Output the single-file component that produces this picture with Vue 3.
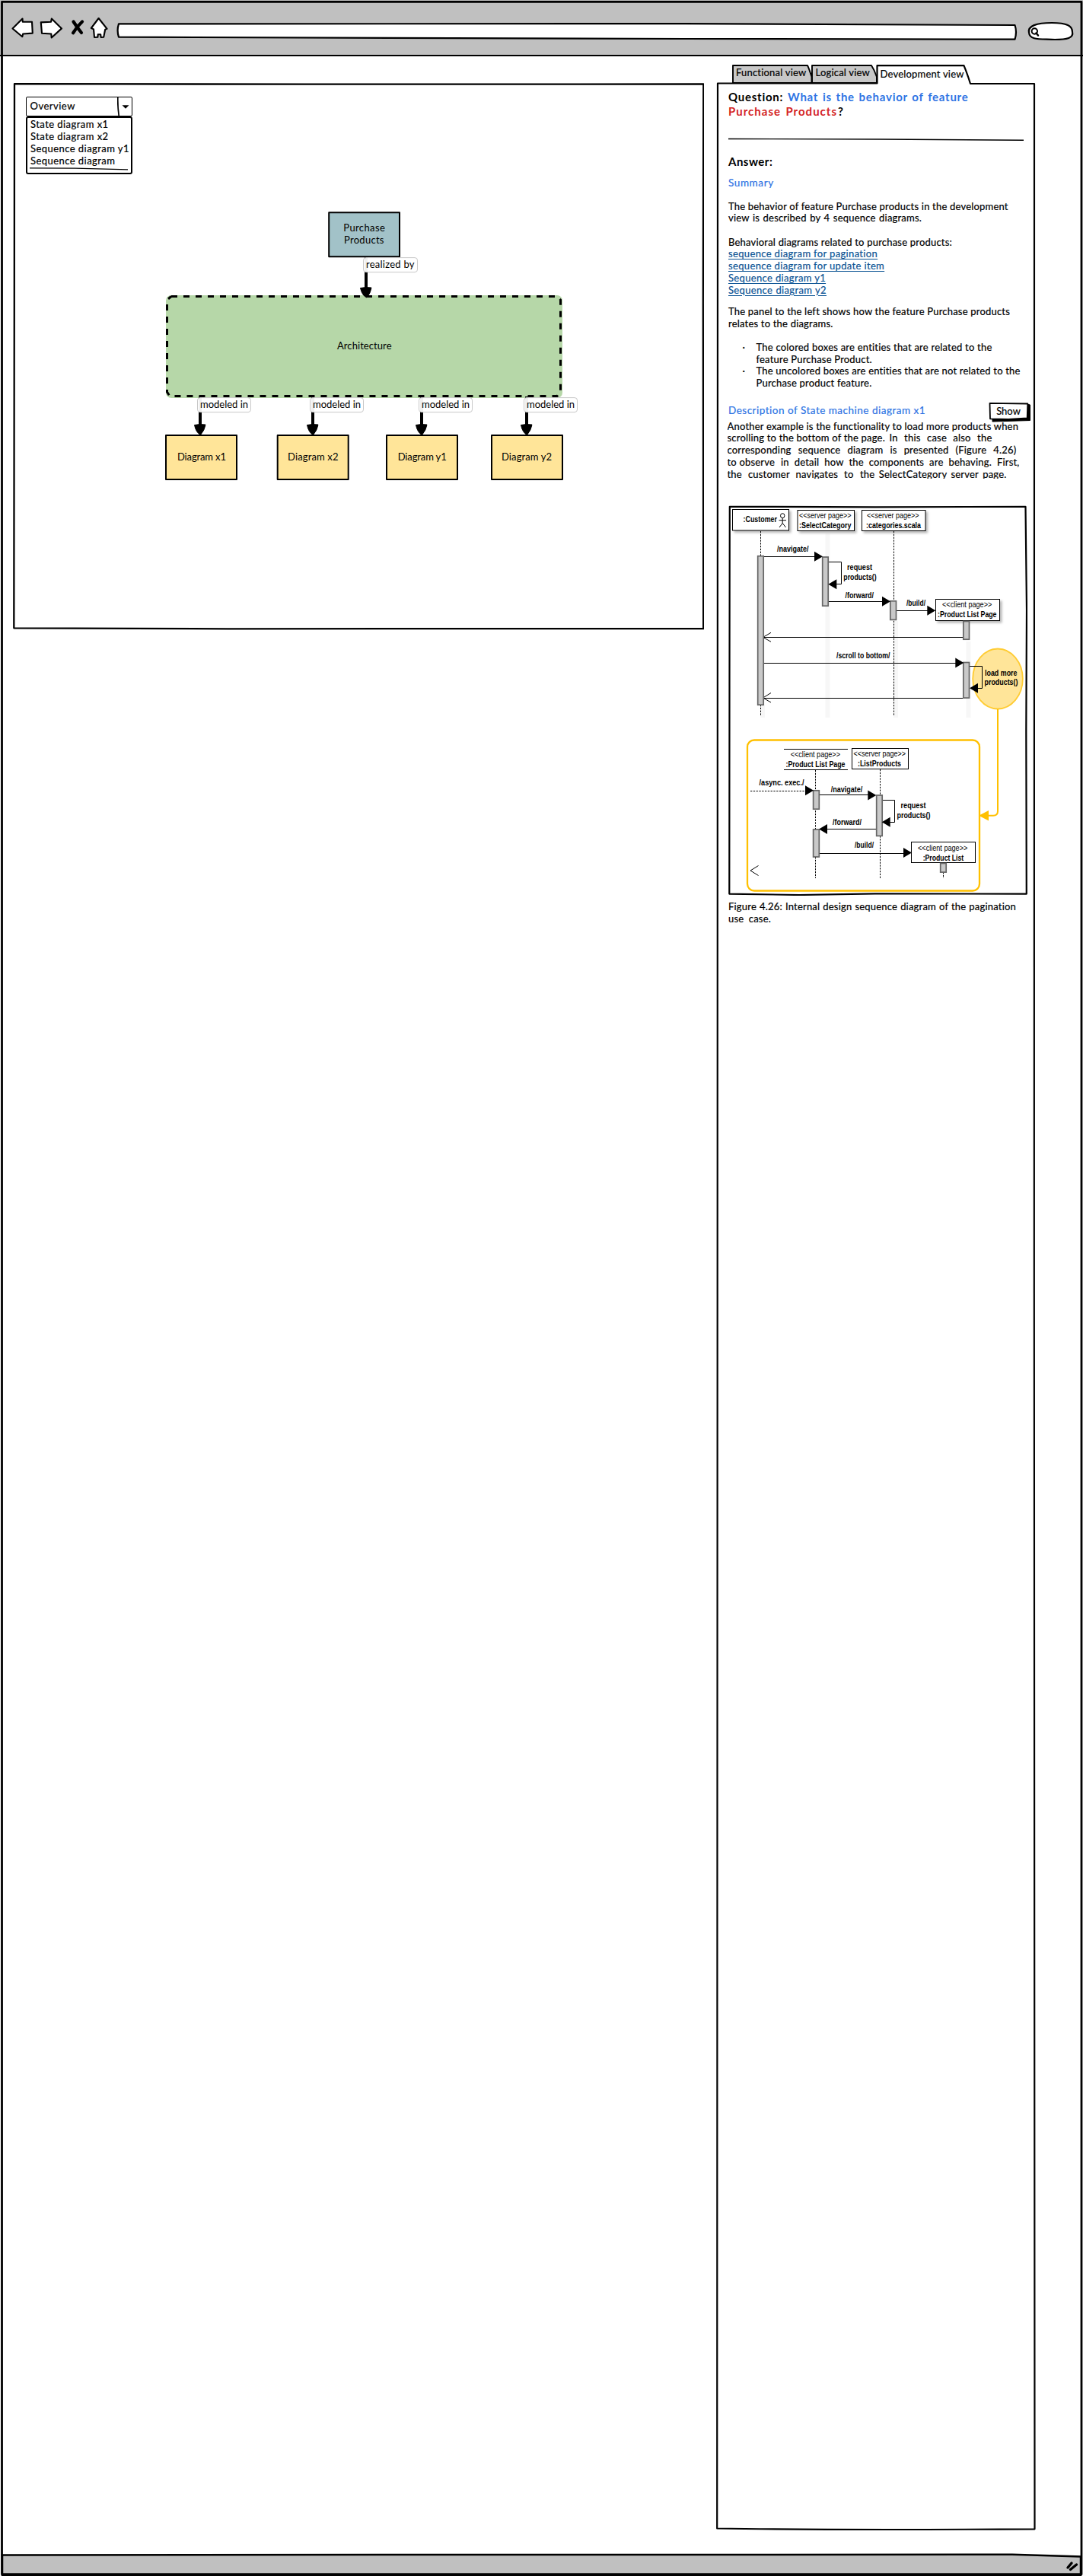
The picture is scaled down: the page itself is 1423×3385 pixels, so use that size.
<script setup>
const options = [
  ['State diagram x1', 98],
  ['State diagram x2', 100],
  ['Sequence diagram y1', 126],
  ['Sequence diagram', 109.5],
]

const summary = [
  ['The behavior of feature Purchase products in the development', 367],
  ['view is described by 4 sequence diagrams.', 254],
]
const links = [
  ['sequence diagram for pagination', 191.5],
  ['sequence diagram for update item', 202],
  ['Sequence diagram y1', 126],
  ['Sequence diagram y2', 129],
]
const panelNote = [
  ['The panel to the left shows how the feature Purchase products', 369],
  ['relates to the diagrams.', 137],
]
const bullets = [
  [
    ['The colored boxes are entities that are related to the', 310],
    ['feature Purchase Product.', 151.5],
  ],
  [
    ['The uncolored boxes are entities that are not related to the', 347],
    ['Purchase product feature.', 151],
  ],
]
const description = [
  [['Another example is the functionality to load more products when', 379]],
  [['scrolling to the bottom of the page.', 204.5], ['In this case also the', 135]],
  [['corresponding sequence diagram is presented (Figure 4.26)', 380]],
  [['to observe', 62], ['in detail how the components are behaving. First,', 313.5]],
  [['the customer navigates to', 166], ['the SelectCategory server page.', 192.5]],
]
const caption = [
  ['Figure 4.26: Internal design sequence diagram of the pagination', 378],
  ['use case.', 56],
]

const diagrams = [
  { x: 218, name: 'Diagram x1', tx: 233, w: 64, arrow: 263 },
  { x: 364.7, name: 'Diagram x2', tx: 378, w: 66.5, arrow: 411 },
  { x: 508, name: 'Diagram y1', tx: 522.7, w: 64, arrow: 554 },
  { x: 646, name: 'Diagram y2', tx: 659, w: 66, arrow: 692 },
]

// [text, x, baseline, width, light]
const labels = [
  [':Customer', 976.5, 685.3, 44.5],
  ['<<server page>>', 1050, 679.7, 68.5, true],
  [':SelectCategory', 1050, 692.8, 68.5],
  ['<<server page>>', 1139, 679.7, 68.5, true],
  [':categories.scala', 1138, 692.8, 72],
  ['/navigate/', 1021, 723.8, 41.5],
  ['request', 1113, 747.8, 33],
  ['products()', 1108.3, 760.7, 43.3],
  ['/forward/', 1110.5, 784.5, 37.5],
  ['/build/', 1191, 794.6, 25],
  ['<<client page>>', 1238, 797.2, 65.3, true],
  [':Product List Page', 1232, 810.2, 77.5],
  ['/scroll to bottom/', 1099, 863.7, 70.5],
  ['load more', 1294, 886.5, 42.5],
  ['products()', 1293.5, 899.4, 44],
  ['<<client page>>', 1038.7, 993.7, 65.3, true],
  [':Product List Page', 1032.5, 1006.5, 78],
  ['<<server page>>', 1121.5, 993, 68.5, true],
  [':ListProducts', 1127, 1006, 57],
  ['/async. exec./', 997.5, 1031, 59],
  ['/navigate/', 1091.7, 1039.6, 41.5],
  ['request', 1183.5, 1060.8, 33],
  ['products()', 1178.5, 1073.7, 44],
  ['/forward/', 1094, 1082.6, 38],
  ['/build/', 1123, 1113, 25],
  ['<<client page>>', 1206, 1116.5, 65.3, true],
  [':Product List', 1212.7, 1129.5, 53.5],
]

// [x, y, width, height]
const activations = [
  [995.7, 729.7, 7.5, 195.5],
  [1080.7, 731, 7.5, 64.2],
  [1169.8, 788.8, 7.7, 24.6],
  [1265.8, 815.5, 7.7, 23.7],
  [1265.8, 869.5, 7.7, 46.6],
  [1068.6, 1037.8, 7.7, 24.4],
  [1068.6, 1089, 7.7, 36],
  [1151.7, 1044, 7.5, 53.4],
  [1235.7, 1133.5, 7.5, 11.6],
]

const solid = [
  'M1003 730.5H1072',
  'M1088 737.5H1105.5V766.5H1099',
  'M1088 789.5H1161',
  'M1178 801.5H1220',
  'M1265 836.5H1003',
  'M1003 870.5H1257',
  'M1274 874.5H1290.5V903.5H1284',
  'M1265 916.5H1003',
  'M1077 1043.5H1141',
  'M1159 1050.5H1175.5V1079.5H1168',
  'M1151 1088.5H1085',
  'M1076 1120.5H1188',
  'M1030 983.5H1114M1030 1010.5H1114',
]
const dashed = ['M999.5 697V940', 'M1174.5 697V940', 'M986 1038.5H1058', 'M1071.5 1011V1153', 'M1156.5 1010V1153', 'M1239.5 1145V1153']

// [tip x, y, direction]
const heads = [
  [1081, 730.3, 1], [1088.3, 766.7, -1], [1170, 789.3, 1], [1229.3, 801.3, 1],
  [1266.3, 870, 1], [1274, 903.3, -1],
  [1069, 1037.8, 1], [1151.3, 1044, 1], [1158.7, 1079.3, -1], [1076, 1088.6, -1], [1198, 1119.6, 1],
]
</script>

<template>
  <div class="window">
    <header class="toolbar">
      <svg class="nav" width="150" height="70" viewBox="0 0 150 70">
        <g fill="#fff" stroke="#000" stroke-width="2.1" stroke-linejoin="round">
          <path d="M16.5 37.5 29.5 24.5 29.8 28.7 42 28.7 42.8 43.6 30.2 44.5 29.3 48.3Z" />
          <path d="M53.8 29.4 67 28.7 67.8 24.6 81 37.4 67.7 49.5 67.3 44.5 55 43.7Z" />
          <path d="M129.6 24 119.8 37 123 38.4 124 49 128.4 48.8 128.7 45.2 132.2 45.2 132.6 49 136.2 48.8 138.2 38.7 140.6 37.8Z" />
        </g>
        <path d="M96.5 28.5Q102 37 107 43M108 28.5Q101 35 96 43.3" fill="none" stroke="#000" stroke-width="4.2" stroke-linecap="round" />
      </svg>
      <svg class="address" width="1186" height="26" viewBox="152 28 1186 26">
        <path d="M156 31.3 900 31.2 1333.5 33Q1336.5 42 1333.5 51.7L900 51 156 48.7Q153.200 40 156 31.3Z" fill="#fff" stroke="#000" stroke-width="2.2" stroke-linejoin="round" />
      </svg>
      <svg class="search" width="64" height="30" viewBox="1348 26 64 30">
        <path d="M1352 43C1350 34 1362 30 1382 30C1402 30 1409 34 1409 42C1411 50 1402 52 1386 52C1366 51 1353 53 1352 43Z" fill="#fff" stroke="#000" stroke-width="2.2" />
        <circle cx="1359.3" cy="41" r="3.7" fill="#fff" stroke="#000" stroke-width="2" />
        <path d="M1361.500 43.500 1364 46.500" stroke="#000" stroke-width="2.4" stroke-linecap="round" />
      </svg>
    </header>

    <main class="content">
      <section class="overview">
        <svg class="frame" width="908" height="720" viewBox="17 108 908 720">
          <path d="M19 110.200 400 110.700 924.300 110.500 923.800 400 924.200 826 300 826.300 18.300 825.300 18.800 400Z" fill="none" stroke="#000" stroke-width="2.300" stroke-linejoin="round" />
        </svg>

        <div class="picker">
          <div class="combo">
            <span class="line combo-value">Overview</span>
            <svg class="combo-arrow" width="20" height="26" viewBox="154 127 20 26">
              <path d="M154.800 128Q154.500 140 156.200 152" fill="none" stroke="#000" stroke-width="1.700" />
              <path d="M160.500 138.200 169.500 138.200 165 142.800Z" />
            </svg>
          </div>
          <div class="menu">
            <span v-for="[text, w] in options" :key="text" class="line" :style="{ width: w + 'px' }">{{ text }}</span>
            <svg class="menu-end" width="130" height="4" viewBox="0 0 130 4">
              <path d="M0 .8 60 1.200 129 2.800" fill="none" stroke="#000" stroke-width="1.300" />
            </svg>
          </div>
        </div>

        <svg class="graph" width="560" height="360" viewBox="215 275 560 360">
          <rect x="432.200" y="279.200" width="92.800" height="58" fill="#a2c2c8" stroke="#000" stroke-width="2" stroke-linejoin="round" />
          <rect x="218" y="388" width="521" height="135" rx="7" fill="#b6d7a8" />
          <path d="M225 389.500H732L736.500 394V515L732 520.500H223L219.500 515V394L225 389.500" fill="none" stroke="#000" stroke-width="3" stroke-dasharray="8 8" />
          <path d="M481 337V382" stroke="#000" stroke-width="4" />
          <path d="M473.500 378.500Q481 377 488 378Q487 385 482 391Q476 389 473.500 378.500Z" stroke="#000" stroke-linejoin="round" />
          <rect x="477.500" y="338.600" width="71" height="19" rx="3.500" fill="#fff" fill-opacity=".94" stroke="#c8c8c8" />
          <g v-for="d in diagrams" :key="d.name">
            <path :d="`M${d.arrow} 521V562`" stroke="#000" stroke-width="4" />
            <path :d="`M${d.arrow - 7.500} 558.500q7 -1.500 14.500 -.5q-1 7 -6.500 13.500q-6 -3 -8 -13z`" stroke="#000" stroke-linejoin="round" />
            <rect :x="d.arrow - 3.500" y="522.600" width="70" height="19" rx="3.500" fill="#fff" fill-opacity=".94" stroke="#c8c8c8" />
            <rect :x="d.x" y="572" width="93" height="58" fill="#ffe599" stroke="#000" stroke-width="2" stroke-linejoin="round" />
            <text :x="d.arrow" y="536" textLength="63">modeled in</text>
            <text :x="d.tx" y="605" :textLength="d.w">{{ d.name }}</text>
          </g>
          <text x="451.300" y="304" textLength="54.500">Purchase</text>
          <text x="452" y="320" textLength="52.500">Products</text>
          <text x="481" y="352" textLength="63.500">realized by</text>
          <text x="443" y="459" textLength="71.500">Architecture</text>
        </svg>
      </section>

      <section class="answer">
        <svg class="frame" width="424" height="3244" viewBox="940 84 424 3244">
          <path d="M963 109V86H1061Q1063 90 1066.500 101V109Z M1067 109V86H1145Q1149 92 1152 101V109Z" fill="#c8c8c8" stroke="#000" stroke-width="1.900" stroke-linejoin="round" />
          <path d="M1152.500 109.500H943L942.700 1700 942.200 3322.500Q1100 3325 1359.500 3323.300L1358.800 1700 1359 110H1275Q1271 97 1266.500 86.200H1152.500Z" fill="#fff" stroke="#000" stroke-width="2.200" stroke-linejoin="round" />
        </svg>
        <nav class="tabs">
          <span class="line" style="width: 91px">Functional view</span>
          <span class="line" style="width: 71.5px">Logical view</span>
          <span class="line active" style="width: 107px">Development view</span>
        </nav>

        <h1 class="question">
          <span class="q-row">
            <span class="line" style="width: 72.5px">Question:</span>
            <span class="line blue" style="width: 237.5px">What is the behavior of feature</span>
          </span>
          <span class="q-row tight">
            <span class="line red" style="width: 143px">Purchase Products</span><span>?</span>
          </span>
        </h1>
        <svg class="rule" width="388" height="6" viewBox="0 0 388 6">
          <path d="M0 2.500 200 3 388 4.300" fill="none" stroke="#000" stroke-width="1.400" />
        </svg>
        <h2 class="answer-title">Answer:</h2>
        <h3 class="subtitle">Summary</h3>

        <p class="block gap-a">
          <span v-for="[text, w] in summary" :key="text" class="line" :style="{ width: w + 'px' }">{{ text }}</span>
        </p>
        <div class="block gap-a">
          <span class="line" style="width: 293px">Behavioral diagrams related to purchase products:</span>
          <a v-for="[text, w] in links" :key="text" class="line link" :style="{ width: w + 'px' }">{{ text }}</a>
        </div>
        <p class="block gap-b">
          <span v-for="[text, w] in panelNote" :key="text" class="line" :style="{ width: w + 'px' }">{{ text }}</span>
        </p>
        <ul class="block gap-a bullets">
          <li v-for="(item, i) in bullets" :key="i">
            <span v-for="[text, w] in item" :key="text" class="line" :style="{ width: w + 'px' }">{{ text }}</span>
          </li>
        </ul>

        <div class="desc-head">
          <h3 class="line blue-text" style="width: 256px">Description of State machine diagram x1</h3>
          <button class="show" type="button">
            <svg class="show-frame" width="56" height="28" viewBox="0 0 56 28">
              <path d="M5 26V22H51V3L54.500 4V24.500Z" stroke="#000" stroke-linejoin="round" />
              <path d="M1.500 1.800 51.300 2.500 50.700 21.500 26 23 2 22.300Z" fill="#fff" stroke="#000" stroke-width="1.800" stroke-linejoin="round" />
            </svg>
            <span>Show</span>
          </button>
        </div>
        <div class="description">
          <div v-for="(row, i) in description" :key="i" class="desc-row">
            <span v-for="[text, w] in row" :key="text" class="line" :style="{ width: w + 'px' }">{{ text }}</span>
          </div>
        </div>

        <svg class="sequence" width="394" height="514" viewBox="956 662 394 514">
          <defs>
            <filter id="soft" x="-20%" y="-30%" width="150%" height="180%">
              <feDropShadow dx="2.500" dy="2.500" stdDeviation="1.500" flood-color="#000" flood-opacity=".28" />
            </filter>
          </defs>
          <path d="M958.800 664.800 1150 665.300 1347.500 664.800 1349 800 1348.300 960 1348.800 1173.600 1150 1173.400 1050 1175 958.300 1173.600 958.500 900Z" fill="#fff" stroke="#000" stroke-width="2.200" stroke-linejoin="round" />
          <path d="M1087.500 700V942M1272.500 842V942M1002 925V942M1177 815V942" stroke="#f7f7f7" stroke-width="6" />
          <g fill="#fff" stroke="#000" filter="url(#soft)">
            <rect x="962.500" y="668.500" width="74" height="27.500" />
            <rect x="1048" y="669.500" width="74.500" height="27" />
            <rect x="1132.500" y="669.500" width="83.500" height="27" />
            <rect x="1229.500" y="786.500" width="84" height="28" />
          </g>
          <g fill="#fff" stroke="#000">
            <rect x="1119.500" y="982.500" width="74" height="27" />
            <rect x="1197.500" y="1105.500" width="84" height="27" />
          </g>
          <ellipse cx="1311" cy="891" rx="32.800" ry="39.500" fill="#ffe599" stroke="#fc3" stroke-width="1.800" />
          <path d="M1311 931V1065Q1311 1070.700 1305 1070.700H1297" fill="none" stroke="#ffc000" stroke-width="2" />
          <path d="M1286 1070.700 1299 1064V1077.500Z" fill="#ffc000" />
          <rect x="982" y="971.500" width="305" height="198" rx="9" fill="none" stroke="#ffc000" stroke-width="2.300" />
          <g fill="none" stroke="#000">
            <path v-for="d in dashed" :key="d" :d="d" stroke-dasharray="2.300 1.500" />
            <path v-for="d in solid" :key="d" :d="d" />
            <path d="M1013 830.300 1002.500 836.400 1013 842.300M1013 909.500 1002.500 916 1013 922M996.500 1136.500 986 1143 996.500 1149.500" />
            <ellipse cx="1028.200" cy="676.700" rx="2.700" ry="3" />
            <path d="M1028.200 679.700V686.500M1023.500 682.700H1033M1024 692 1028.200 686.500 1032.500 692" />
          </g>
          <rect v-for="([x, y, w, h], i) in activations" :key="i" :x="x" :y="y" :width="w" :height="h" fill="#c9c9c9" stroke="#666" stroke-width="1.700" />
          <path v-for="([x, y, s], i) in heads" :key="'h' + i" :d="`M${x} ${y}l${-11 * s} -6.500v13z`" />
          <text v-for="([text, x, y, w, light], i) in labels" :key="'t' + i" :x="x" :y="y" :textLength="w" lengthAdjust="spacingAndGlyphs" :class="{ light }">{{ text }}</text>
        </svg>
        <p class="block caption">
          <span v-for="[text, w] in caption" :key="text" class="line" :style="{ width: w + 'px' }">{{ text }}</span>
        </p>
      </section>
    </main>

    <footer class="status">
      <svg width="1423" height="31" viewBox="0 3354 1423 31">
        <path d="M3 3357.500 500 3357 1330 3356.800 1420 3359.500V3385H3Z" fill="#c0c0c0" stroke="#000" stroke-width="2.500" />
        <path d="M1403 3374 1408 3368M1406.500 3376.500 1414.500 3370" stroke="#000" stroke-width="3.400" stroke-linecap="round" />
      </svg>
    </footer>
    <svg class="window-edge" width="1423" height="3385" viewBox="0 0 1423 3385">
      <path d="M2.500 2.300H1421V3382.700H2.500Z" fill="none" stroke="#000" stroke-width="2.800" stroke-linejoin="round" />
    </svg>
  </div>
</template>

<style>
body {
  margin: 0;
  background: #fff;
}
</style>

<style scoped>
.window {
  position: relative;
  display: flex;
  flex-direction: column;
  width: 1423px;
  height: 3385px;
  overflow: hidden;
  background: #fff;
  font: 13px/15.7px Lato, "Noto Sans", sans-serif;
  letter-spacing: .2px;
  -webkit-text-stroke: .2px;
  color: #000;
}
svg {
  display: block;
}
.window-edge {
  position: absolute;
  inset: 0;
  pointer-events: none;
}
.toolbar {
  box-sizing: border-box;
  display: flex;
  flex: none;
  height: 74px;
  background: #c0c0c0;
  border-bottom: 2.5px solid #000;
}
.address {
  margin: 28px 0 0 2px;
}
.search {
  margin: 26px 0 0 10px;
}
.content {
  display: flex;
  flex: 1;
}
.line {
  display: block;
  white-space: nowrap;
  text-align: justify;
  text-align-last: justify;
}
.frame,
.combo-arrow,
.show-frame {
  position: absolute;
}
.overview {
  position: relative;
  box-sizing: border-box;
  width: 908px;
  height: 720px;
  margin: 34px 15px 0 17px;
  padding: 19px 0 0 17px;
}
.overview > .frame {
  left: 0;
  top: 0;
}
.picker {
  width: 140px;
}
.combo {
  position: relative;
  box-sizing: border-box;
  width: 139.500px;
  height: 26px;
  padding: 3.500px 0 0 4.500px;
  border: 1.700px solid #000;
  border-radius: 2px;
}
.combo-value {
  width: 56px;
  letter-spacing: .5px;
}
.combo-arrow {
  right: -1px;
  top: -1px;
}
.menu {
  box-sizing: border-box;
  width: 139.500px;
  height: 76px;
  padding: 0 0 0 4px;
  line-height: 16px;
  letter-spacing: .45px;
  border: 2.400px solid #000;
  border-radius: 3px;
}
.menu-end {
  margin: 1px 0 0 -1px;
}
.graph {
  margin: 46px 0 0 181px;
}
text {
  font: 13px Lato, "Noto Sans", sans-serif;
  letter-spacing: 0;
}
.answer {
  position: relative;
  box-sizing: border-box;
  width: 424px;
  padding: 10px 0 0 17px;
}
.answer > .frame {
  left: 0;
  top: 10px;
}
.answer > *:not(.frame) {
  position: relative;
}
.tabs {
  display: flex;
  gap: 13.500px;
  height: 34px;
  padding: 4px 0 0 10px;
  box-sizing: border-box;
}
.tabs .active {
  margin-top: 2px;
}
h1,
h2,
h3,
p,
ul {
  margin: 0;
  padding: 0;
  font: inherit;
  list-style: none;
}
.question {
  font: bold 15px/19px Lato, sans-serif;
  -webkit-text-stroke: 0;
}
.q-row {
  display: flex;
  gap: 5.500px;
}
.q-row.tight {
  gap: 1px;
}
.question .line {
  letter-spacing: .75px;
}
.question .red {
  letter-spacing: 1px;
}
.blue {
  color: #2f74e4;
}
.red {
  color: #d42426;
}
.rule {
  margin-top: 24px;
}
.answer-title {
  margin-top: 17px;
  font: bold 15px/19px Lato, sans-serif;
  letter-spacing: .5px;
  -webkit-text-stroke: 0;
}
.subtitle {
  margin-top: 10px;
  font-size: 13.500px;
  line-height: 16px;
  letter-spacing: .6px;
  color: #2f74e4;
}
.gap-a {
  margin-top: 15.700px;
}
.gap-b {
  margin-top: 12.500px;
}
.link {
  color: #0b5394;
  letter-spacing: .35px;
  text-decoration: underline;
  text-underline-offset: 2px;
}
.bullets {
  padding-left: 36.500px;
}
.bullets li {
  position: relative;
}
.bullets li::before {
  content: "·";
  position: absolute;
  left: -18px;
}
.desc-head {
  display: flex;
  justify-content: space-between;
  width: 397px;
  height: 25px;
  margin-top: 16px;
}
.blue-text {
  margin-top: 4px;
  font-size: 13.500px;
  letter-spacing: .5px;
  color: #2f74e4;
}
.show {
  position: relative;
  width: 55px;
  height: 25px;
  padding: 0 3px 0 0;
  border: 0;
  background: none;
  font: 13px/21px Lato, sans-serif;
  color: #000;
}
.show-frame {
  left: 0;
  top: 0;
}
.show span {
  position: relative;
}
.description {
  height: 76px;
  margin-left: -1.500px;
  overflow: hidden;
}
.desc-row {
  display: flex;
  gap: 8.500px;
}
.sequence {
  margin: 34px 0 0 -1px;
}
.sequence text {
  font: bold 10.700px "Liberation Sans", Arial, sans-serif;
  -webkit-text-stroke: 0;
}
.sequence text.light {
  font-weight: normal;
}
.caption {
  margin-top: 7.500px;
}
.status {
  flex: none;
  height: 31px;
}
</style>
